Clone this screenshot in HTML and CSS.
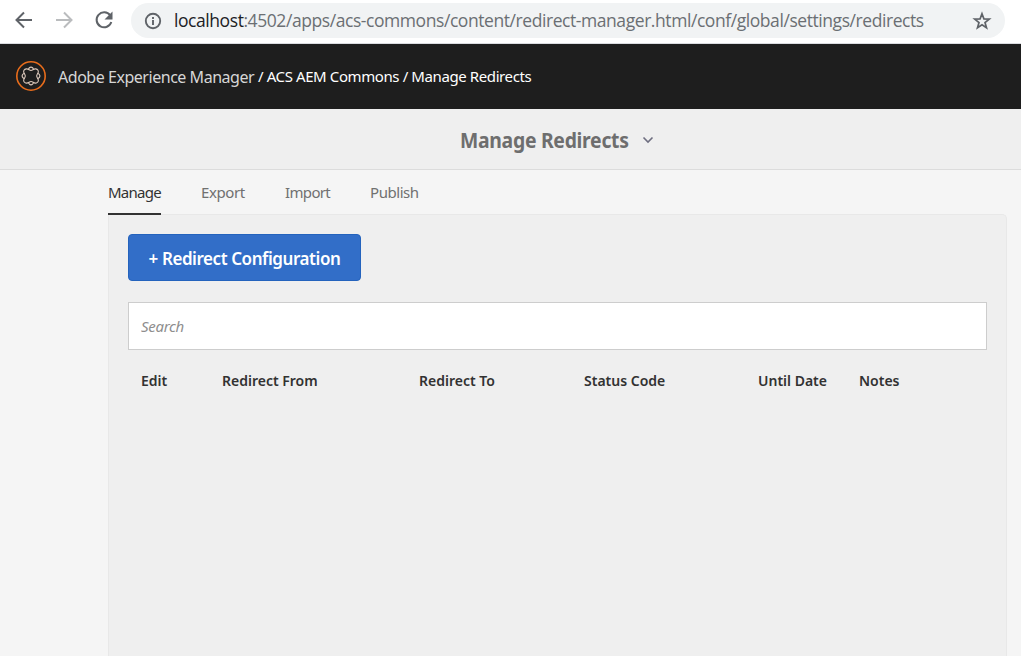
FILE: index.html
```html
<!DOCTYPE html>
<html lang="en">
<head>
<meta charset="utf-8">
<title>Manage Redirects</title>
<link rel="stylesheet" href="styles.css">
</head>
<body>
<div class="browser">
  <svg class="nav-icon" viewBox="0 0 24 24"><path d="M20 12H5M12 4.500 4.500 12l7.500 7.500"/></svg>
  <svg class="nav-icon disabled" viewBox="0 0 24 24"><path d="M4 12h15M12 4.500l7.500 7.500-7.500 7.500"/></svg>
  <svg class="nav-icon" viewBox="0 0 24 24"><path d="M18.200 7.400A7.500 7.500 0 1 0 19.300 14"/><path class="solid" d="M20.500 3.500v8h-8z"/></svg>
  <div class="address">
    <svg class="info" viewBox="0 0 18 18"><circle cx="9" cy="9" r="7.200"/><path d="M9 8v5M9 5v1.900"/></svg>
    <span class="url"><span class="host">localhost</span>:4502/apps/acs-commons/content/redirect-manager.html/conf/global/settings/redirects</span>
    <svg class="star" viewBox="0 0 20 20"><path d="m10 2.800 1.900 5.100 5.400.2-4.300 3.400 1.500 5.200-4.500-3-4.500 3L7 11.500 2.700 8.100l5.400-.2z"/></svg>
  </div>
</div>
<header class="shell">
  <svg class="logo" viewBox="0 0 32 32">
    <circle class="ring" cx="16" cy="16" r="14.200"/>
    <g class="chain">
      <path d="M13.300 9.800c1-3.600 4.400-3.600 5.400 0M13.300 22.200c1 3.600 4.400 3.600 5.400 0M9.800 13.300c-3.600 1-3.600 4.400 0 5.400M22.200 13.300c3.600 1 3.600 4.400 0 5.400"/>
      <path d="M16 10.500c-1.700-.2-2.700-2-4.800-1.600s-3 2.200-2.400 3.700 1.500 1.900 1.500 3.400-1 1.900-1.500 3.400.3 3.300 2.400 3.700 3.100-1.400 4.800-1.600 2.700 2 4.800 1.600 3-2.200 2.400-3.700-1.500-1.900-1.500-3.400 1-1.900 1.500-3.400-.3-3.300-2.400-3.700-3.100 1.400-4.800 1.600z"/>
    </g>
  </svg>
  <span class="product">Adobe Experience Manager</span>
  <span class="crumbs">/ ACS AEM Commons / Manage Redirects</span>
</header>
<div class="title-bar">
  <h1>Manage Redirects</h1>
  <svg class="chevron" viewBox="0 0 12 8"><path d="m1.500 1.500 4.500 4.500 4.500-4.500"/></svg>
</div>
<main>
  <nav class="tabs"><a class="tab selected">Manage</a><a class="tab export">Export</a><a class="tab import">Import</a><a class="tab publish">Publish</a></nav>
  <section class="panel">
    <button class="primary"><span>+ Redirect Configuration</span></button>
    <input class="search" placeholder="Search">
    <div class="columns"><b>Edit</b><b>Redirect From</b><b>Redirect To</b><b>Status Code</b><b>Until Date</b><b>Notes</b></div>
  </section>
</main>
</body>
</html>
```

FILE: styles.css
```css
* { box-sizing: border-box; }
body { margin: 0; height: 656px; overflow: hidden; background: #f5f5f5; font: 15px "Noto Sans", sans-serif; display: flex; flex-direction: column; }
svg { fill: none; flex: none; }
.browser { height: 44px; flex: none; background: #fff; border-bottom: 1px solid #dadce0; display: flex; align-items: flex-start; padding: 3px 16px 0 12px; }
.nav-icon { width: 24px; height: 24px; margin: 5px 16px 0 0; stroke: #5f6368; stroke-width: 2; }
.nav-icon.disabled { stroke: #babcbe; }
.nav-icon .solid { fill: #5f6368; stroke: none; }
.address { height: 35px; flex: 1; margin-left: -1px; border-radius: 18px; background: #f1f3f4; display: flex; align-items: center; padding: 0 13px; color: #6b6f73; }
.info { width: 18px; height: 18px; stroke: #5f6368; stroke-width: 1.900; }
.url { margin-left: 12px; padding-bottom: 2px; flex: 1; white-space: nowrap; font: 17.500px "Open Sans", sans-serif; letter-spacing: -0.430px; }
.host { color: #202124; }
.star { width: 20px; height: 20px; stroke: #5f6368; stroke-width: 1.700; }
.shell { height: 65px; flex: none; background: #1e1e1e; color: #fff; display: flex; align-items: center; padding: 0 0 1px 15px; white-space: nowrap; }
.logo { width: 32px; height: 32px; }
.ring { stroke: #e86d1c; stroke-width: 1.600; }
.chain { stroke: #d8c5b8; stroke-width: 1.100; }
.product { margin-left: 11px; width: 200px; font-size: 17px; letter-spacing: -0.5px; color: #d6d6d6; transform: scaleX(.942); transform-origin: left; }
.crumbs { font-size: 15px; letter-spacing: -0.400px; }
.title-bar { height: 61px; flex: none; background: #efefef; border-bottom: 1px solid #dcdcdc; display: flex; align-items: center; padding: 1px 0 0 460px; }
h1 { margin: 0; width: 182px; font-size: 20.500px; letter-spacing: -0.300px; color: #6e6e6e; white-space: nowrap; transform: scaleX(.945); transform-origin: left; }
.chevron { width: 12px; height: 8px; stroke: #6e6e80; stroke-width: 1.600; }
main { flex: 1; padding: 0 14px 0 108px; display: flex; flex-direction: column; }
.tabs { height: 44px; flex: none; display: flex; gap: 40px; position: relative; }
.tab { height: 45px; line-height: 45px; color: #707070; }
.selected { width: 53px; border-bottom: 2px solid #323232; color: #323232; letter-spacing: -0.750px; }
.export { width: 44px; letter-spacing: -0.400px; }
.import { width: 45px; letter-spacing: -0.650px; }
.publish { letter-spacing: -0.450px; }
.panel { flex: 1; background: #efefef; border: 1px solid #e8e8e8; border-bottom: 0; border-radius: 0 5px 0 0; padding: 19px; }
.primary { display: block; width: 233px; height: 47px; padding: 2px 0 0; border: 1px solid #2463bd; border-radius: 4px; background: #326ec8; color: #fff; font: 600 17px "Noto Sans", sans-serif; letter-spacing: -0.430px; white-space: nowrap; }
.search { display: block; width: 859px; height: 48px; margin-top: 21px; padding: 0 12px; border: 1px solid #cdcdcd; background: #fff; font: 15px "Noto Sans", sans-serif; }
.search::placeholder { color: #8e8e8e; font-style: italic; letter-spacing: -0.300px; }
.columns { display: grid; grid-template-columns: 81px 197px 165px 174px 101px 1fr; margin: 20px 0 0 13px; font-size: 14px; line-height: 22px; color: #323232; }
.columns b { font-weight: 600; }
```
